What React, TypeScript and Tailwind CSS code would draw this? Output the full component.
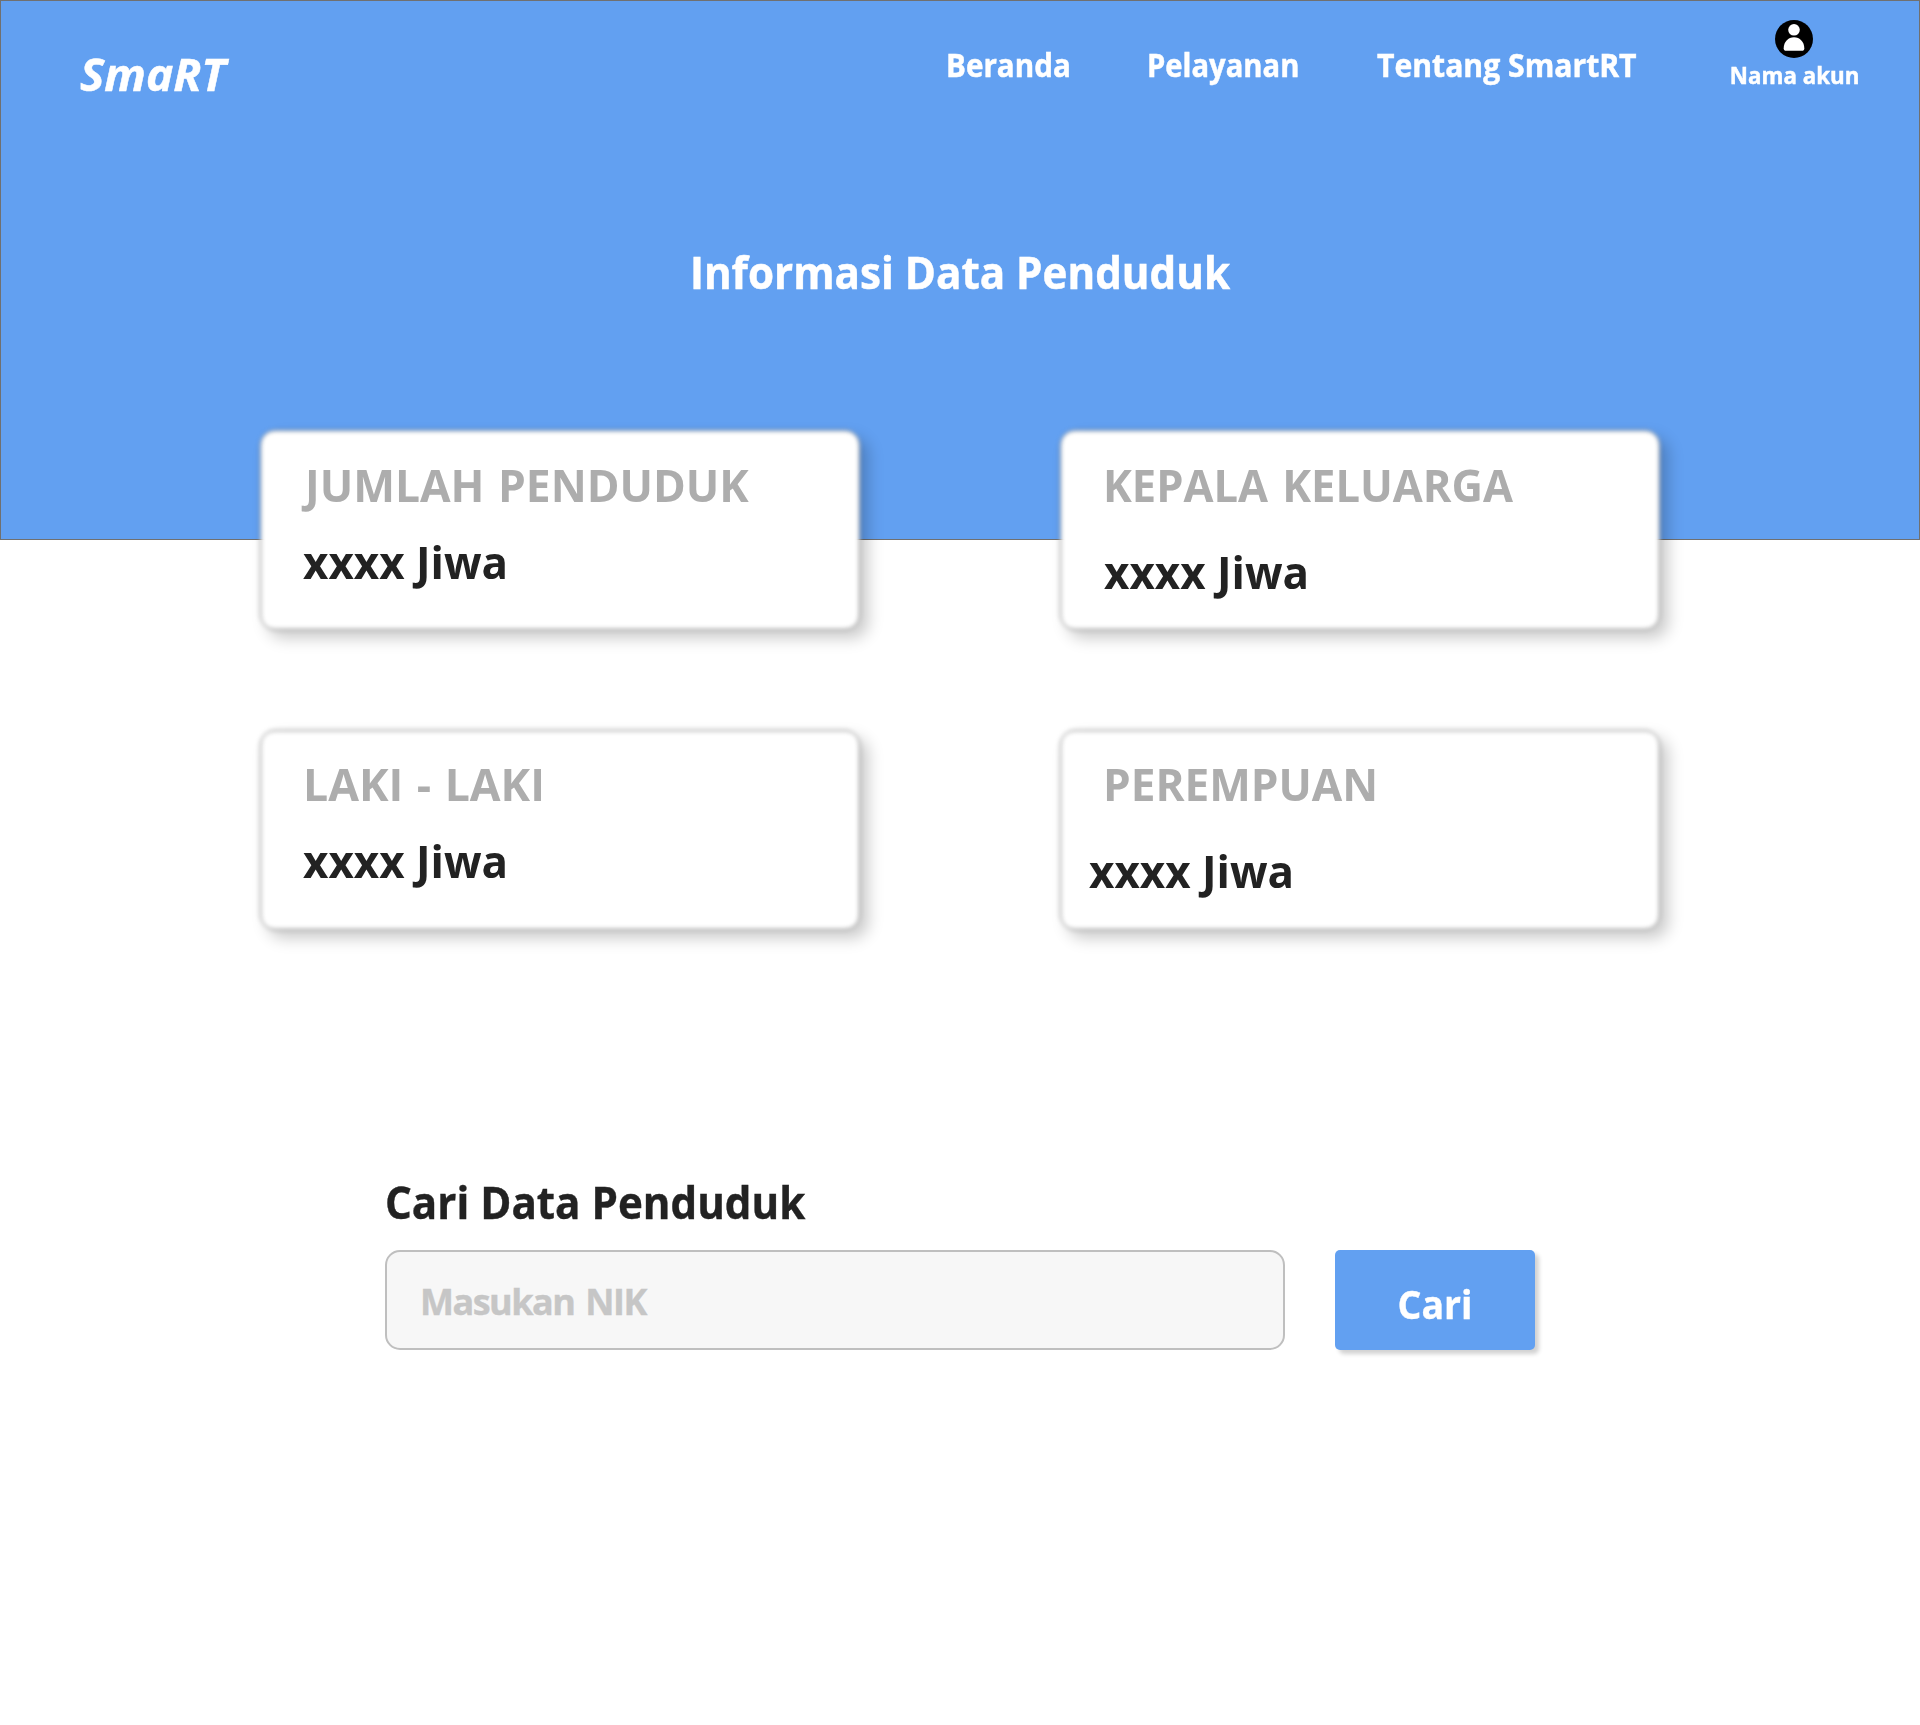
type Stat = {
  title: string;
  value: string;
  titleClass: string;
  valueClass: string;
};

const stats: Stat[] = [
  {
    title: "JUMLAH PENDUDUK",
    value: "xxxx Jiwa",
    titleClass: "mt-[25px] ml-[45px] scale-x-[0.985] [word-spacing:2px]",
    valueClass: "mt-[17px] ml-[43px]",
  },
  {
    title: "KEPALA KELUARGA",
    value: "xxxx Jiwa",
    titleClass: "mt-[25px] ml-[43px] scale-x-[0.966] [word-spacing:3px]",
    valueClass: "mt-[27px] ml-[44px]",
  },
  {
    title: "LAKI - LAKI",
    value: "xxxx Jiwa",
    titleClass: "mt-[24px] ml-[43px] scale-x-[0.99] [word-spacing:2px]",
    valueClass: "mt-[17px] ml-[43px]",
  },
  {
    title: "PEREMPUAN",
    value: "xxxx Jiwa",
    titleClass: "mt-[24px] ml-[43px] scale-x-[0.98]",
    valueClass: "mt-[27px] ml-[29px]",
  },
];

function UserIcon() {
  return (
    <svg viewBox="0 0 38 38" className="size-[38px]" aria-hidden="true">
      <circle cx="19" cy="19" r="19" fill="#000" />
      <circle cx="19" cy="9.8" r="5.8" fill="#fff" />
      <path
        d="M8.7 28.2C8.7 22 13.2 17.3 19 17.3S29.3 22 29.3 28.2C29.3 30 28.4 30.8 26.8 30.8H11.2C9.6 30.8 8.7 30 8.7 28.2Z"
        fill="#fff"
      />
    </svg>
  );
}

function Header() {
  return (
    <header className="h-[540px] border border-[#707070] bg-[#62a0f1] text-white [-webkit-text-stroke:0.5px]">
      <nav className="flex h-[120px] items-start pl-[79px]">
        <a className="mt-[43px] w-[866px] origin-left scale-x-[1.022] text-[45px] leading-[60px] italic">SmaRT</a>
        <a className="mt-[42px] w-[201px] origin-left scale-x-[0.925] text-[32px] leading-[44px]">Beranda</a>
        <a className="mt-[42px] w-[230px] origin-left scale-x-[0.912] text-[32px] leading-[44px]">Pelayanan</a>
        <a className="mt-[42px] w-[337px] origin-left scale-x-[0.942] text-[32px] leading-[44px]">
          Tentang SmartRT
        </a>
        <div className="mt-[19px] flex w-[160px] flex-col items-center">
          <UserIcon />
          <span className="mt-px ml-px scale-x-[0.93] text-[24px] leading-[32px] whitespace-nowrap">Nama akun</span>
        </div>
      </nav>
      <h1 className="mt-[121px] scale-x-[0.9365] text-center text-[45px] leading-[60px]">
        Informasi Data Penduduk
      </h1>
    </header>
  );
}

function StatCard({ title, value, titleClass, valueClass }: Stat) {
  return (
    <article className="relative isolate h-[200px] w-[600px]">
      <div className="absolute inset-0 -z-10 rounded-[15px] border border-[#707070] bg-white shadow-[8px_8px_15px_rgba(0,0,0,0.21)] blur-[2px]" />
      <div className="flex flex-col items-start">
        <h2 className={`origin-left text-[45px] leading-[60px] text-[#adadad] ${titleClass}`}>{title}</h2>
        <p className={`origin-left scale-x-[0.976] text-[45px] leading-[60px] text-[#222] ${valueClass}`}>{value}</p>
      </div>
    </article>
  );
}

function SearchForm() {
  return (
    <section className="mt-[242px] ml-[385px] [-webkit-text-stroke:0.4px]">
      <h2 className="w-fit origin-left scale-x-[0.936] text-[45px] leading-[60px] text-[#222]">Cari Data Penduduk</h2>
      <div className="mt-[18px] flex gap-[50px]">
        <input
          className="h-[100px] w-[900px] rounded-[15px] border-2 border-[#bfbfbf] bg-[#f7f7f7] pt-[2px] pl-[33px] text-[36px] font-bold tracking-[-1.5px] [word-spacing:3px] placeholder:text-[#c6c6c6]"
          placeholder="Masukan NIK"
        />
        <button className="h-[100px] w-[200px] rounded-[5px] bg-[#62a0f1] pt-[7px] text-[40px] text-white shadow-[4px_4px_4px_rgba(0,0,0,0.18)]">
          <span className="inline-block scale-x-[0.937]">Cari</span>
        </button>
      </div>
    </section>
  );
}

export default function App() {
  return (
    <div className="h-[1725px] w-[1920px] overflow-hidden bg-white font-['Open_Sans',sans-serif] font-bold">
      <Header />
      <main>
        <section className="-mt-[110px] ml-[260px] grid grid-cols-[600px_600px] gap-x-[200px] gap-y-[100px]">
          {stats.map((stat) => (
            <StatCard key={stat.title} {...stat} />
          ))}
        </section>
        <SearchForm />
      </main>
    </div>
  );
}
